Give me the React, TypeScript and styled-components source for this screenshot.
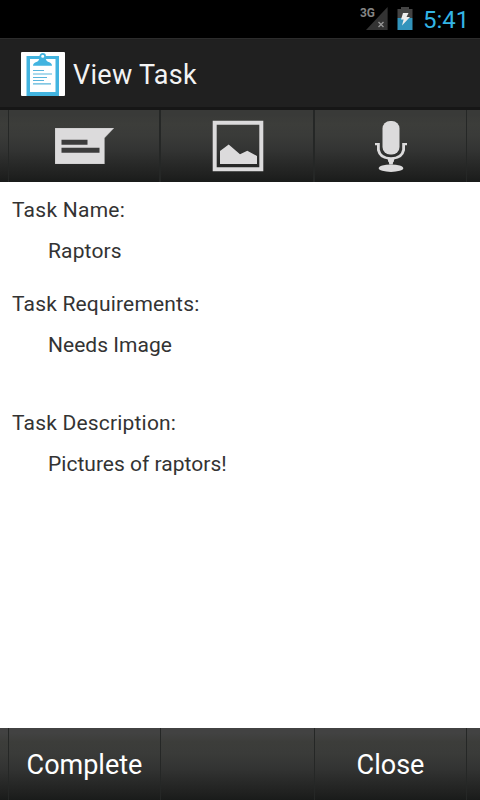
import React from 'react';
import styled, { createGlobalStyle } from 'styled-components';

const GlobalStyle = createGlobalStyle`
  * { box-sizing: border-box; }
  body { margin: 0; background: #fff; font-family: Roboto, sans-serif; }
`;

const Screen = styled.main`
  width: 480px;
  height: 800px;
  display: flex;
  flex-direction: column;
  overflow: hidden;
  background: #fff;
`;

const StatusBar = styled.div`
  height: 38px;
  flex: none;
  display: flex;
  align-items: flex-start;
  justify-content: flex-end;
  background: #000;
  padding-right: 10px;
`;

const Clock = styled.time`
  width: 47px;
  margin-left: 7px;
  padding-top: 1px;
  font-size: 24px;
  line-height: 38px;
  letter-spacing: 0;
  white-space: nowrap;
  color: #33b5e5;
`;

const ActionBar = styled.header`
  height: 72px;
  flex: none;
  display: flex;
  align-items: center;
  gap: 8px;
  padding: 2px 21px 0;
  background: #202020;
  border-top: 1px solid #2c2c2c;
  border-bottom: 3px solid #161616;
`;

const Title = styled.h1`
  margin: 2px 0 0;
  font-size: 27px;
  line-height: 36px;
  font-weight: 400;
  color: #f3f3f3;
  letter-spacing: 0.28px;
`;

const ButtonBar = styled.div<{ $top: string }>`
  height: 72px;
  flex: none;
  display: grid;
  grid-template-columns: 9px 152px 154px 152px 13px;
  background: linear-gradient(
    ${(p) => p.$top} 0, ${(p) => p.$top} 5px, #3c3d3a 14px, #3a3b39 25px,
    #333433 40px, #282928 54px, #1f201f 66px, #191b1a 72px
  );
`;

const Cell = styled.div`
  border-right: 1px solid #252726;
  &:last-child { border-right: 0; }
`;

const BarButton = styled.button<{ $nudge?: number; $divider?: number }>`
  display: flex;
  align-items: center;
  justify-content: center;
  border: 0;
  border-right: ${(p) => p.$divider ?? 1}px solid #252726;
  padding: 0 0 0 ${(p) => p.$nudge ?? 0}px;
  background: transparent;
  color: #fff;
  font: 400 27px/36px Roboto, sans-serif;
`;

const ButtonLabel = styled.span`
  padding-top: 1px;
`;

const Details = styled.dl`
  flex: 1;
  margin: 0;
  padding: 13px 12px 0;
  color: #333;
  font-size: 21px;
  line-height: 30px;
`;

const Term = styled.dt<{ $spacing: number }>`
  letter-spacing: ${(p) => p.$spacing}px;
`;

const Value = styled.dd<{ $spacing: number; $after: number }>`
  margin: 11px 0 ${(p) => p.$after}px 36px;
  letter-spacing: ${(p) => p.$spacing}px;
`;

const StatusIcons = () => (
  <svg width="56" height="38" viewBox="0 0 56 38">
    <text x="0" y="17" fill="#858585" fontFamily="Roboto" fontWeight="700" fontSize="12.5" textLength="15" lengthAdjust="spacingAndGlyphs">3G</text>
    <path d="M27.6 7v23H6z" fill="#333" />
    <path d="M18.5 22l5 5m0-5l-5 5" stroke="#969696" strokeWidth="1.4" />
    <path d="M41 7h8v2h3.5v9h-15V9H41z" fill="#444" />
    <path d="M37.5 18h15v12h-15z" fill="#3294bc" />
    <path d="M43 13h5.5l-2 4H50l-8 8.5 1.6-6H41z" fill="#eee" />
  </svg>
);

const ClipboardIcon = () => (
  <svg width="44" height="44" viewBox="0 0 44 44">
    <rect width="44" height="44" rx="1" fill="#fff" />
    <path d="M5.5 4h32.5v40H5.5z" fill="#42b4e0" />
    <path d="M9 7h25.5v33H9z" fill="#fff" />
    <path d="M12 13.7c0-2 1-3 4-4 2-.7 2-3.3 3-3.7h5c1 .4 1 3 3 3.7 3 1 4 2 4 4z" fill="#42b4e0" />
    <circle cx="21.7" cy="4.2" r="2.4" fill="#fff" stroke="#42b4e0" strokeWidth="1.7" />
    <path d="M12 18.5h11m-11 3.5h19m-19 3.5h14m-14 3h11m-11 3.3h18" stroke="#59b5dc" strokeWidth="1.2" />
  </svg>
);

const NoteIcon = () => (
  <svg width="59" height="36" viewBox="0 0 59 36">
    <path d="M0 0h59L49.5 10v26H0z" fill="#dcdbdc" stroke="#aaa" strokeWidth=".4" />
    <path d="M6.5 11.7h26v5h-26zm0 8h38v5h-38z" fill="#3b3b3b" />
  </svg>
);

const ImageIcon = () => (
  <svg width="52" height="52" viewBox="0 0 52 52">
    <path d="M2.7 2.7h46.6v46.6H2.7z" fill="none" stroke="#dcdbdc" strokeWidth="4" />
    <path d="M8 31l8.7-6.5L28 34.3l7.3-3.6L45 36v8H8z" fill="#dcdbdc" />
  </svg>
);

const MicIcon = () => (
  <svg width="32" height="52" viewBox="0 0 32 52">
    <rect x="7.5" y="1" width="17" height="33.5" rx="7.5" fill="#dcdbdc" />
    <path d="M0 23h4.8v6.5Q6 37 16 37.3 26 37 27.2 29.5V23H32v2.3h-2v5Q28 38.8 18.7 39.4l-1 5.2h-3.4l-1-5.2Q4 38.8 2 30.3v-5H0z" fill="#dcdbdc" />
    <path d="M12.5 38.5h7l-1 3.4h-5z" fill="#dcdbdc" />
    <ellipse cx="16" cy="48.2" rx="12.3" ry="3.7" fill="#dcdbdc" />
  </svg>
);

export default function App() {
  return (
    <>
      <GlobalStyle />
      <Screen>
        <StatusBar>
          <StatusIcons />
          <Clock>5:41</Clock>
        </StatusBar>
        <ActionBar>
          <ClipboardIcon />
          <Title>View Task</Title>
        </ActionBar>
        <ButtonBar $top="#393a38">
          <Cell />
          <BarButton aria-label="Note" $divider={2} $nudge={1}><NoteIcon /></BarButton>
          <BarButton aria-label="Image" $divider={2} $nudge={2}><ImageIcon /></BarButton>
          <BarButton aria-label="Audio" $nudge={1}><MicIcon /></BarButton>
          <Cell />
        </ButtonBar>
        <Details>
          <Term $spacing={0.25}>Task Name:</Term>
          <Value $spacing={0.15} $after={23}>Raptors</Value>
          <Term $spacing={0.18}>Task Requirements:</Term>
          <Value $spacing={0.03} $after={48}>Needs Image</Value>
          <Term $spacing={0.19}>Task Description:</Term>
          <Value $spacing={0.02} $after={0}>Pictures of raptors!</Value>
        </Details>
        <ButtonBar $top="#424242">
          <Cell />
          <BarButton><ButtonLabel>Complete</ButtonLabel></BarButton>
          <Cell />
          <BarButton><ButtonLabel>Close</ButtonLabel></BarButton>
          <Cell />
        </ButtonBar>
      </Screen>
    </>
  );
}
